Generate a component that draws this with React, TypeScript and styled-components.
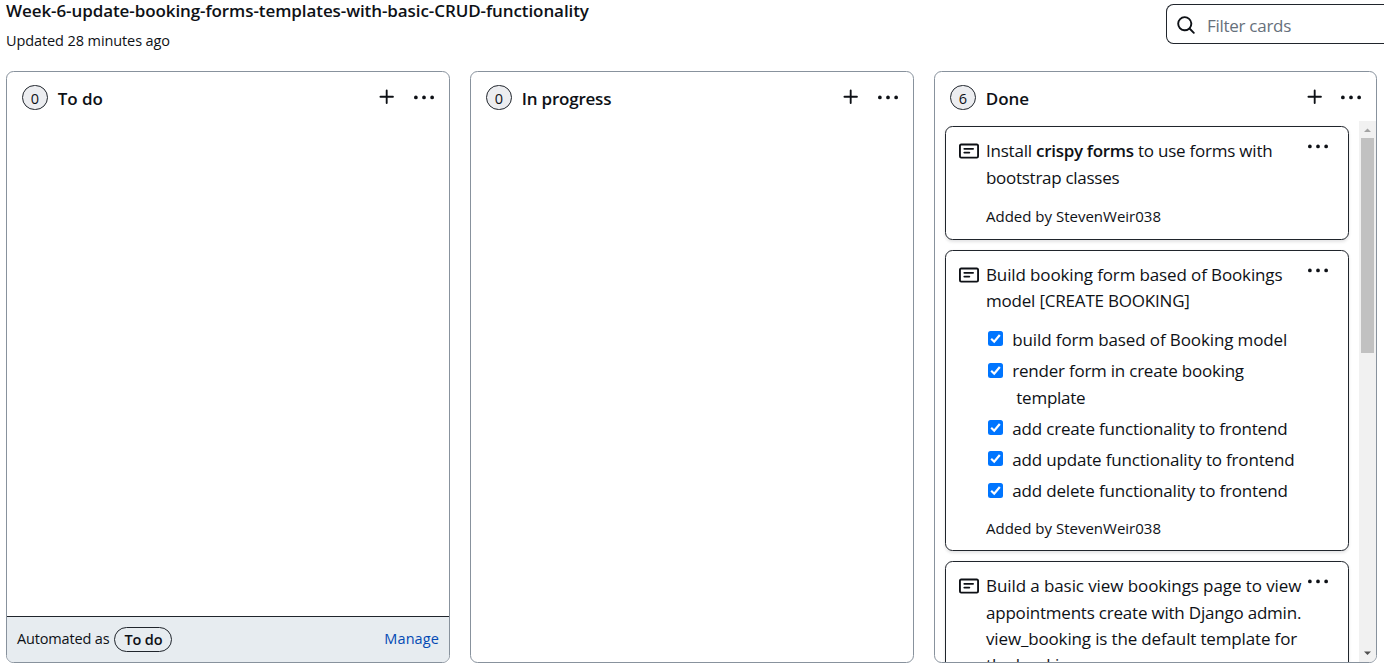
import React from "react";
import styled, { createGlobalStyle } from "styled-components";

const GlobalStyle = createGlobalStyle`
  *, *::before, *::after { box-sizing: border-box; }
  html, body { margin: 0; padding: 0; background: #fff; overflow: hidden; }
  body {
    color: #0e1116;
    font-family: "Open Sans", "Noto Sans", sans-serif;
    font-size: 17px;
    line-height: 26.25px;
  }
`;

const Page = styled.main`
  display: flex;
  flex-direction: column;
  width: 1384px;
  height: 671px;
  padding: 0 0 8px 6px;
  overflow: hidden;
`;

const Header = styled.header`
  display: flex;
  justify-content: space-between;
  height: 71px;
  flex: none;
`;

const Heading = styled.div`
  display: flex;
  flex-direction: column;
  margin-top: -2px;
`;

const ProjectName = styled.h1`
  margin: 0;
  font-size: 17px;
  font-weight: 600;
  line-height: 26px;
  letter-spacing: -0.085px;
  white-space: nowrap;
`;

const Updated = styled.span`
  margin-top: 7px;
  font-size: 14.5px;
  line-height: 20px;
  letter-spacing: -0.1px;
`;

const Search = styled.label`
  display: flex;
  align-items: center;
  gap: 11px;
  width: 218px;
  height: 40px;
  margin-top: 4px;
  padding-left: 9px;
  border: 1px solid #20252c;
  border-right: 0;
  border-radius: 7.5px 0 0 7.5px;
  color: #66707b;
  letter-spacing: -0.28px;

  svg { margin-top: 1px; }
  span { margin-top: 4px; }
`;

const Icon = styled.svg`
  display: block;
  flex: none;
  width: 20px;
  height: 20px;
  fill: #0e1116;
`;

const Board = styled.div`
  display: flex;
  gap: 20px;
  flex: 1;
  min-height: 0;
`;

const Column = styled.section<{ $width?: number }>`
  display: flex;
  flex-direction: column;
  flex: none;
  width: ${(p) => p.$width ?? 444}px;
  border: 1px solid #88929d;
  border-radius: 7.5px;
  overflow: hidden;
`;

const ColumnTop = styled.div`
  display: flex;
  align-items: flex-start;
  height: 49px;
  flex: none;
  padding: 13px 15px 0 15px;
`;

const Counter = styled.span`
  display: flex;
  align-items: center;
  justify-content: center;
  width: 26px;
  height: 25px;
  padding-top: 1px;
  border: 1px solid #20252c;
  border-radius: 13px;
  background: #ecedf0;
  font-size: 14.5px;
  line-height: 23px;
`;

const ColumnName = styled.h2<{ $spacing: number }>`
  flex: 1;
  margin: 1px 0 0 9.8px;
  font-size: 17px;
  font-weight: 600;
  line-height: 26px;
  letter-spacing: ${(p) => p.$spacing}px;
`;

const Actions = styled.div<{ $gap: number }>`
  display: flex;
  gap: ${(p) => p.$gap}px;
  margin-top: 2px;

  & > svg:last-child { margin-top: 0.6px; }
`;

const Automation = styled.footer`
  display: flex;
  align-items: center;
  height: 46px;
  margin-top: auto;
  padding: 0 10px;
  border-top: 1px solid #20252c;
  background: #e7ecf0;
  font-size: 14.5px;
  letter-spacing: -0.16px;
`;

const Tag = styled.span`
  height: 25px;
  margin: 0 auto 0 5px;
  padding: 0 9px;
  border: 1px solid #20252c;
  border-radius: 13px;
  font-weight: 600;
  line-height: 23px;
`;

const Manage = styled.a`
  margin-top: -1px;
  color: #0349b4;
  letter-spacing: 0.1px;
  line-height: 20px;
`;

const Scroller = styled.div`
  display: flex;
  flex: 1;
  min-height: 0;
`;

const Cards = styled.div`
  display: flex;
  flex-direction: column;
  flex: 1;
  gap: 10px;
  padding: 5px 10px 0;
  overflow: hidden;
`;

const Card = styled.article<{ $height: number }>`
  display: flex;
  align-items: flex-start;
  flex: none;
  height: ${(p) => p.$height}px;
  padding: 11px 20px 0 13px;
  border: 1px solid #20252c;
  border-radius: 7.5px;
  background: #fff;
  box-shadow: 0 1.25px 3px rgba(31, 35, 40, 0.12);

  & > svg:first-child { margin-top: 3px; }
  & > svg:last-child { margin-top: -1px; }
`;

const CardBody = styled.div<{ $offset: number }>`
  display: flex;
  flex-direction: column;
  flex: 1;
  margin-left: 7px;
  padding-top: ${(p) => p.$offset}px;
  min-width: 0;
`;

const Line = styled.span<{ $spacing: number; $indent?: number }>`
  display: block;
  padding-left: ${(p) => p.$indent ?? 0}px;
  letter-spacing: ${(p) => p.$spacing}px;
  white-space: pre;

  b { font-weight: 600; letter-spacing: -0.3px; }
`;

const Tasks = styled.ul`
  display: flex;
  flex-direction: column;
  gap: 5px;
  margin: 12.6px 0 0;
  padding: 0;
  list-style: none;
`;

const Task = styled.li`
  display: flex;
  align-items: flex-start;
`;

const Check = styled.span`
  width: 15px;
  height: 15px;
  margin: 4.3px 9.6px 0 1.7px;
  border-radius: 2.5px;
  background: #0075ff;

  svg { display: block; width: 15px; height: 15px; }
`;

const AddedBy = styled.span<{ $gap: number }>`
  margin-top: ${(p) => p.$gap}px;
  font-size: 15px;
  line-height: 20px;
`;

const ScrollTrack = styled.div`
  display: flex;
  flex-direction: column;
  align-items: center;
  width: 17px;
  background: #f1f1f1;

  svg { display: block; width: 17px; height: 17px; }
`;

const ScrollThumb = styled.div`
  width: 13px;
  height: 215px;
  margin-bottom: auto;
  background: #c1c1c1;
`;

const paths = {
  search:
    "M10.68 11.74a6 6 0 0 1-7.922-8.982 6 6 0 0 1 8.982 7.922l3.04 3.04a.749.749 0 0 1-.326 1.275.749.749 0 0 1-.734-.215ZM11.5 7a4.499 4.499 0 1 0-8.997 0A4.499 4.499 0 0 0 11.5 7Z",
  plus: "M7.75 2a.75.75 0 0 1 .75.75V7h4.25a.75.75 0 0 1 0 1.5H8.5v4.25a.75.75 0 0 1-1.5 0V8.5H2.75a.75.75 0 0 1 0-1.5H7V2.75A.75.75 0 0 1 7.75 2Z",
  more: "M8 9a1.5 1.5 0 1 0 0-3 1.5 1.5 0 0 0 0 3ZM1.5 9a1.5 1.5 0 1 0 0-3 1.5 1.5 0 0 0 0 3Zm13 0a1.5 1.5 0 1 0 0-3 1.5 1.5 0 0 0 0 3Z",
  note: "M0 3.75C0 2.784.784 2 1.75 2h12.5c.966 0 1.75.784 1.75 1.75v8.5A1.75 1.75 0 0 1 14.25 14H1.75A1.75 1.75 0 0 1 0 12.25Zm1.75-.25a.25.25 0 0 0-.25.25v8.5c0 .138.112.25.25.25h12.5a.25.25 0 0 0 .25-.25v-8.5a.25.25 0 0 0-.25-.25ZM3.5 6.25a.75.75 0 0 1 .75-.75h7a.75.75 0 0 1 0 1.5h-7a.75.75 0 0 1-.75-.75Zm.75 2.25h4a.75.75 0 0 1 0 1.5h-4a.75.75 0 0 1 0-1.5Z",
};

const Octicon = ({ name }: { name: keyof typeof paths }) => (
  <Icon viewBox="0 0 16 16" aria-hidden="true">
    <path d={paths[name]} />
  </Icon>
);

type TextLine = { text: React.ReactNode; spacing: number; indent?: number };
type CardData = {
  height: number;
  offset: number;
  title: TextLine[];
  tasks?: TextLine[][];
  author?: string;
  authorGap?: number;
};

const doneCards: CardData[] = [
  {
    height: 114,
    offset: 0.4,
    title: [
      { text: <>Install <b>crispy forms</b> to use forms with</>, spacing: -0.22 },
      { text: "bootstrap classes", spacing: -0.28 },
    ],
    author: "StevenWeir038",
    authorGap: 14.8,
  },
  {
    height: 301,
    offset: 0,
    title: [
      { text: "Build booking form based of Bookings", spacing: -0.13 },
      { text: "model [CREATE BOOKING]", spacing: -0.2 },
    ],
    tasks: [
      [{ text: "build form based of Booking model", spacing: -0.12 }],
      [
        { text: "render form in create booking", spacing: -0.23 },
        { text: "template", spacing: -0.25, indent: 4 },
      ],
      [{ text: "add create functionality to frontend", spacing: -0.19 }],
      [{ text: "add update functionality to frontend", spacing: -0.18 }],
      [{ text: "add delete functionality to frontend", spacing: -0.17 }],
    ],
    author: "StevenWeir038",
    authorGap: 13.8,
  },
  {
    height: 180,
    offset: 0.4,
    title: [
      { text: "Build a basic view bookings page to view", spacing: -0.09 },
      { text: "appointments create with Django admin.", spacing: -0.21 },
      { text: "view_booking is the default template for", spacing: -0.15 },
      { text: "the booking app", spacing: -0.15 },
    ],
  },
];

const Lines = ({ lines }: { lines: TextLine[] }) => (
  <div>
    {lines.map((l, i) => (
      <Line key={i} $spacing={l.spacing} $indent={l.indent}>{l.text}</Line>
    ))}
  </div>
);

type ColumnHeaderProps = { count: number; name: string; spacing: number; gap?: number };

const ColumnHeader = ({ count, name, spacing, gap = 17 }: ColumnHeaderProps) => (
  <ColumnTop>
    <Counter>{count}</Counter>
    <ColumnName $spacing={spacing}>{name}</ColumnName>
    <Actions $gap={gap}>
      <Octicon name="plus" />
      <Octicon name="more" />
    </Actions>
  </ColumnTop>
);

export default function App() {
  return (
    <>
      <GlobalStyle />
      <Page>
        <Header>
          <Heading>
            <ProjectName>Week-6-update-booking-forms-templates-with-basic-CRUD-functionality</ProjectName>
            <Updated>Updated 28 minutes ago</Updated>
          </Heading>
          <Search>
            <Octicon name="search" />
            <span>Filter cards</span>
          </Search>
        </Header>
        <Board>
          <Column>
            <ColumnHeader count={0} name="To do" spacing={-0.1} />
            <Automation>
              Automated as <Tag>To do</Tag>
              <Manage>Manage</Manage>
            </Automation>
          </Column>
          <Column>
            <ColumnHeader count={0} name="In progress" spacing={-0.22} />
          </Column>
          <Column $width={443}>
            <ColumnHeader count={6} name="Done" spacing={-0.1} gap={16} />
            <Scroller>
              <Cards>
                {doneCards.map((card, i) => (
                  <Card key={i} $height={card.height}>
                    <Octicon name="note" />
                    <CardBody $offset={card.offset}>
                      <Lines lines={card.title} />
                      {card.tasks && (
                        <Tasks>
                          {card.tasks.map((task, j) => (
                            <Task key={j}>
                              <Check>
                                <svg viewBox="0 0 15 15">
                                  <path d="M3.2 7.8 6.2 10.7 11.8 4" fill="none" stroke="#fff" strokeWidth="2.2" />
                                </svg>
                              </Check>
                              <Lines lines={task} />
                            </Task>
                          ))}
                        </Tasks>
                      )}
                      {card.author && <AddedBy $gap={card.authorGap ?? 15}>Added by {card.author}</AddedBy>}
                    </CardBody>
                    <Octicon name="more" />
                  </Card>
                ))}
              </Cards>
              <ScrollTrack>
                <svg viewBox="0 0 17 17"><path d="M5 11 8.5 7.5 12 11Z" fill="#a3a3a3" /></svg>
                <ScrollThumb />
                <svg viewBox="0 0 17 17"><path d="M5 6.5 8.5 10 12 6.5Z" fill="#505050" /></svg>
              </ScrollTrack>
            </Scroller>
          </Column>
        </Board>
      </Page>
    </>
  );
}
